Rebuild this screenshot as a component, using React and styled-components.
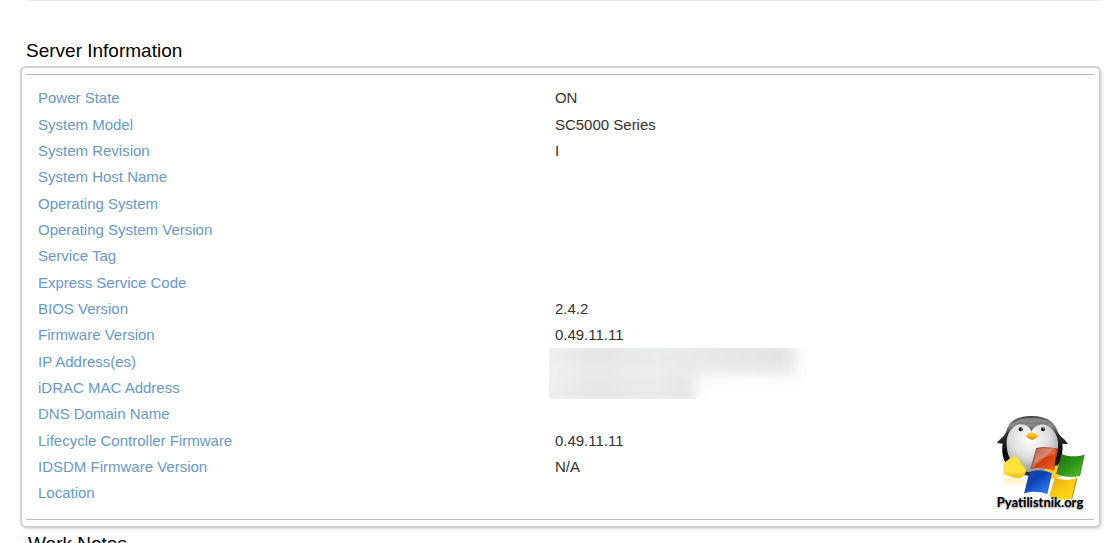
import React from "react";
import styled, { createGlobalStyle } from "styled-components";

const GlobalStyle = createGlobalStyle`
  * { box-sizing: border-box; }
  body {
    margin: 0;
    background: #fff;
    color: #333;
    font-family: "Liberation Sans", Arial, sans-serif;
    font-size: 15px;
  }
`;

const Page = styled.main`
  padding: 0 9px 0 20px;
`;

const Divider = styled.hr`
  height: 1px;
  margin: 0 0 0 6px;
  border: 0;
  background: #ebebec;
`;

const Heading = styled.h2`
  margin: 0;
  padding: ${(p) => (p.$after ? "4px 8px 0" : "38px 6px 3px")};
  color: #000;
  font-size: 19px;
  line-height: 24px;
  font-weight: 400;
`;

const Panel = styled.section`
  position: relative;
  padding: 6px 5px 6px 4px;
  border: 2px solid #d0d1d3;
  border-radius: 6px;
  box-shadow: 1px 1px 3px rgba(0, 0, 0, 0.16);
`;

const Frame = styled.div`
  padding: 10px 0 13px;
  border-top: 1px solid #b9bac0;
  border-bottom: 1px solid #b9bac0;
`;

const InfoTable = styled.table`
  width: 100%;
  border-collapse: collapse;
  table-layout: fixed;
`;

const Row = styled.tr`
  height: 26px;
  &:nth-child(3n + 2) { height: 27px; }
`;

const Label = styled.th`
  width: 48.4%;
  padding: 0 0 0 12px;
  color: #6699cc;
  font-weight: 400;
  line-height: 20px;
  text-align: left;
`;

const Value = styled.td`
  position: relative;
  padding: 0 12px;
  line-height: 20px;
`;

const Redaction = styled.span`
  position: absolute;
  top: 0;
  left: 6px;
  z-index: 1;
  width: 266px;
  height: 51px;
  overflow: hidden;
`;

const Smudge = styled.span`
  display: block;
  width: ${(p) => p.$width}px;
  height: ${(p) => p.$height}px;
  margin: ${(p) => p.$margin};
  background: linear-gradient(90deg, #efefef 0, #e4e5e5 60px, #eaebeb 115px, #e2e2e2 100%);
  filter: blur(8px);
`;

const Watermark = styled.figure`
  position: absolute;
  right: 11px;
  bottom: 18px;
  width: 96px;
  margin: 0;
  text-align: center;
`;

const Logo = styled.svg`
  display: block;
  width: 96px;
  height: 84px;
  overflow: visible;
`;

const Caption = styled.figcaption`
  position: relative;
  color: #000;
  font-family: Lato, "Open Sans", sans-serif;
  font-size: 13px;
  font-weight: 700;
  line-height: 12px;
  white-space: nowrap;
  text-shadow: 0 1px 2px rgba(0, 0, 0, 0.5);
`;

const rows = [
  ["Power State", "ON"],
  ["System Model", "SC5000 Series"],
  ["System Revision", "I"],
  ["System Host Name", ""],
  ["Operating System", ""],
  ["Operating System Version", ""],
  ["Service Tag", ""],
  ["Express Service Code", ""],
  ["BIOS Version", "2.4.2"],
  ["Firmware Version", "0.49.11.11"],
  ["IP Address(es)", "", true],
  ["iDRAC MAC Address", ""],
  ["DNS Domain Name", ""],
  ["Lifecycle Controller Firmware", "0.49.11.11"],
  ["IDSDM Firmware Version", "N/A"],
  ["Location", ""],
];

function PenguinLogo() {
  return (
    <Logo viewBox="21 21 288 252" aria-hidden="true">
      <defs>
        <radialGradient id="belly" cx="45%" cy="30%" r="75%">
          <stop offset="0" stopColor="#ffffff" />
          <stop offset="0.5" stopColor="#dedee0" />
          <stop offset="1" stopColor="#8a8b8f" />
        </radialGradient>
        <linearGradient id="coat" x1="0" y1="0" x2="0" y2="1">
          <stop offset="0" stopColor="#444" />
          <stop offset="0.16" stopColor="#8c8c8c" />
          <stop offset="0.3" stopColor="#333" />
          <stop offset="0.6" stopColor="#080808" />
          <stop offset="1" stopColor="#333" />
        </linearGradient>
        <linearGradient id="foot" x1="0" y1="0" x2="0" y2="1">
          <stop offset="0" stopColor="#ffdf38" />
          <stop offset="0.7" stopColor="#ffe33c" />
          <stop offset="1" stopColor="#f6b51b" />
        </linearGradient>
        <linearGradient id="red" x1="0" y1="0" x2="1" y2="1">
          <stop offset="0" stopColor="#a8301c" />
          <stop offset="0.45" stopColor="#d06a4c" />
          <stop offset="0.5" stopColor="#d43c0d" />
          <stop offset="1" stopColor="#f5641a" />
        </linearGradient>
        <linearGradient id="green" x1="0" y1="0" x2="1" y2="1">
          <stop offset="0" stopColor="#1d7012" />
          <stop offset="0.5" stopColor="#2b9415" />
          <stop offset="1" stopColor="#5cc930" />
        </linearGradient>
        <linearGradient id="blue" x1="0" y1="0" x2="0.8" y2="1">
          <stop offset="0" stopColor="#1c479c" />
          <stop offset="0.45" stopColor="#0d43b8" />
          <stop offset="1" stopColor="#2d84f4" />
        </linearGradient>
        <linearGradient id="yellow" x1="0" y1="0" x2="0.8" y2="1">
          <stop offset="0" stopColor="#e5a30c" />
          <stop offset="0.5" stopColor="#f8c710" />
          <stop offset="1" stopColor="#ffdc24" />
        </linearGradient>
        <linearGradient id="reflection" x1="0" y1="0" x2="0" y2="1">
          <stop offset="0" stopColor="#fff0b0" />
          <stop offset="1" stopColor="#ffffff" />
        </linearGradient>
      </defs>
      <path d="M55 224C75 217 105 220 126 228C108 246 75 249 55 238Z" fill="url(#reflection)" />
      <path d="M66 73C72 47 101 32 140 33C181 33 209 49 217 77C222 91 231 96 239 104L249 117L232 116C236 158 220 193 190 207C158 220 104 212 78 193C53 174 49 139 53 116L36 114C45 101 59 97 66 73Z" fill="url(#coat)" />
      <path d="M65 119C62 92 79 65 99 59C119 55 132 64 139 79C147 65 162 57 180 59C207 68 222 95 219 126C217 173 188 202 145 203C98 203 66 167 65 119Z" fill="url(#belly)" />
      <path d="M84 60C97 42 119 39 144 39C172 39 192 46 200 61C184 48 163 50 141 55C119 50 99 50 84 60Z" fill="#999" opacity="0.7" />
      <circle cx="107" cy="73" r="6" fill="#111" />
      <circle cx="174" cy="73" r="6" fill="#111" />
      <circle cx="109" cy="71" r="1.5" fill="#fff" />
      <circle cx="176" cy="71" r="1.5" fill="#fff" />
      <path d="M121 93C128 87 134 82 141 83C149 82 155 89 161 92C153 98 149 104 140 104C132 103 128 97 121 93Z" fill="#ffc51d" />
      <path d="M124 93Q141 98 158 93Q148 104 140 104Q133 102 124 93Z" fill="#ec970b" />
      <path d="M55 174C69 168 78 153 91 153C102 157 106 179 120 189C127 198 121 211 107 218C89 222 70 212 55 207Z" fill="url(#foot)" />
      <path d="M162 214C172 193 196 178 219 182L232 213L188 226Z" fill="#fbcb25" />
      <path d="M155 129C175 123 199 127 218 130L206 197C184 190 159 186 137 193Z" fill="url(#red)" />
      <path d="M229 147C250 156 275 156 298 149L284 213C263 219 235 216 215 207Z" fill="url(#green)" />
      <path d="M133 201C156 192 181 196 200 205L186 267C162 259 137 258 117 266Z" fill="url(#blue)" />
      <path d="M209 218C231 225 254 227 276 219L261 281C236 287 212 284 193 273Z" fill="url(#yellow)" />
      <path d="M155 132C173 126 194 130 213 133L210 147C187 153 161 161 144 181Z" fill="#fff" opacity="0.2" />
      <path d="M218 130L206 197M298 149L284 213M200 205L186 267M276 219L261 281M155 129L137 193M229 147L215 207" fill="none" stroke="#33251c" strokeWidth="3" opacity="0.45" />
    </Logo>
  );
}

export default function App() {
  return (
    <>
      <GlobalStyle />
      <Page>
        <Divider />
        <Heading>Server Information</Heading>
        <Panel>
          <Frame>
            <InfoTable>
              <tbody>
                {rows.map(([label, value, redacted]) => (
                  <Row key={label}>
                    <Label scope="row">{label}</Label>
                    <Value>
                      {value}
                      {redacted && (
                        <Redaction>
                          <Smudge $width={256} $height={36} $margin="-10px 0 0 -10px" />
                          <Smudge $width={156} $height={40} $margin="-6px 0 0 -10px" />
                        </Redaction>
                      )}
                    </Value>
                  </Row>
                ))}
              </tbody>
            </InfoTable>
          </Frame>
          <Watermark>
            <PenguinLogo />
            <Caption>Pyatilistnik.org</Caption>
          </Watermark>
        </Panel>
        <Heading $after>Work Notes</Heading>
      </Page>
    </>
  );
}
